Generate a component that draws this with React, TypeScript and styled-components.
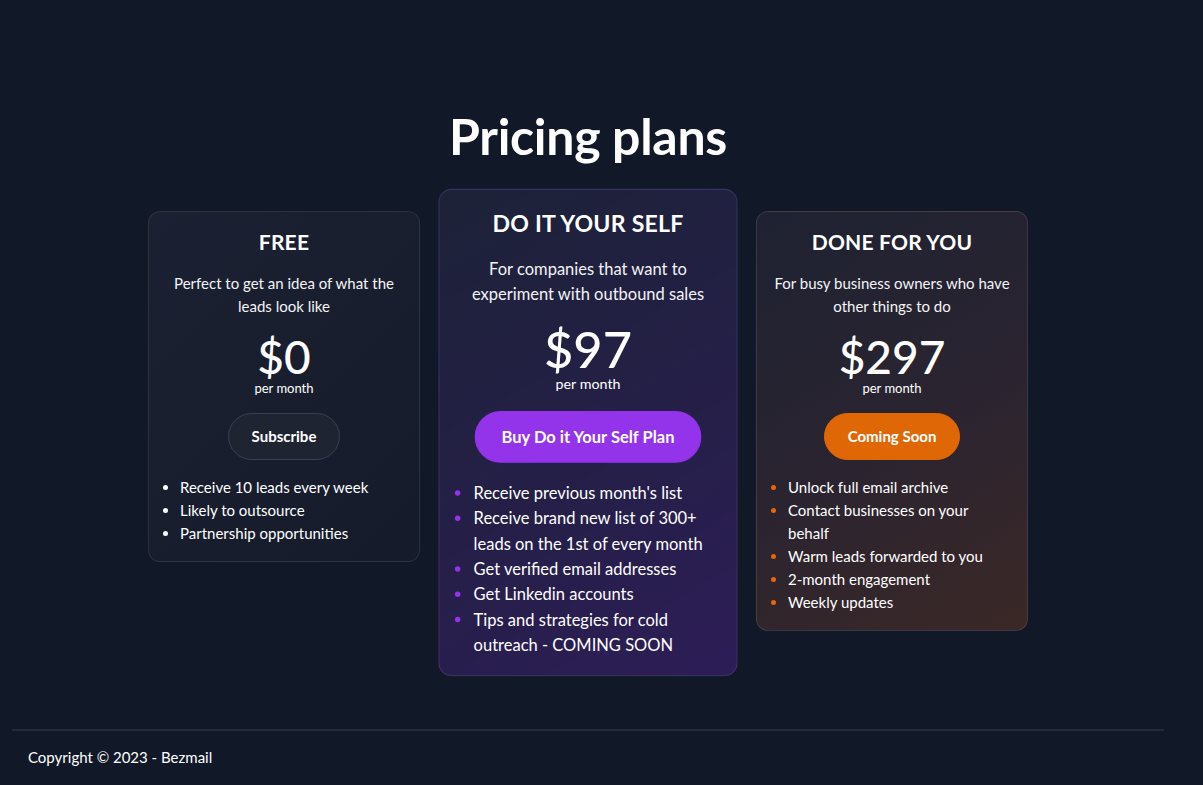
import styled, { createGlobalStyle, css } from 'styled-components';

const GlobalStyle = createGlobalStyle`
  body {
    margin: 0;
    background: #111827;
    color: #ffffff;
    font-family: Lato, "Noto Sans", sans-serif;
  }
`;

type Tone = 'free' | 'diy' | 'dfy';

const tones = {
  free: {
    bg: 'linear-gradient(135deg, #1b2132 0%, #151b2a 100%)',
    bullet: '#ffffff',
    border: 'rgba(255, 255, 255, 0.09)',
  },
  diy: {
    bg: 'linear-gradient(150deg, #1c2237 0%, #251f48 55%, #2d1d57 100%)',
    bullet: '#9333ea',
    border: 'rgba(150, 130, 220, 0.18)',
  },
  dfy: {
    bg: 'linear-gradient(150deg, #1e2232 0%, #2b2430 55%, #3b2826 100%)',
    bullet: '#e8650a',
    border: 'rgba(255, 255, 255, 0.1)',
  },
};

const Page = styled.div`
  padding: 0 39px 0 12px;
  min-height: 785px;
  display: flex;
  flex-direction: column;
`;

const Main = styled.main`
  padding-top: 104px;
  flex: 1;
`;

const Title = styled.h1`
  margin: 0 0 43px;
  text-align: center;
  font-size: 50px;
  font-weight: 700;
  line-height: 64px;
  letter-spacing: -0.3px;
`;

const Cards = styled.div`
  display: flex;
  justify-content: center;
  align-items: flex-start;
  gap: 32px;
`;

const Card = styled.section<{ $tone: Tone; $featured?: boolean }>`
  width: 272px;
  box-sizing: border-box;
  padding: 16px;
  border-radius: 12px;
  background: ${({ $tone }) => tones[$tone].bg};
  border: 1px solid ${({ $tone }) => tones[$tone].border};
  display: flex;
  flex-direction: column;
  align-items: center;
  text-align: center;
  ${({ $featured }) =>
    $featured &&
    css`
      transform: scale(1.1);
    `}
`;

const PlanName = styled.h2`
  margin: 0;
  font-size: 21px;
  font-weight: 700;
  line-height: 28px;
  letter-spacing: 0.2px;
`;

const Description = styled.p`
  margin: 16px 0 0;
  font-size: 15px;
  line-height: 23px;
  color: #f3f4f6;
`;

const Price = styled.div`
  margin-top: 15px;
  font-size: 46px;
  font-weight: 500;
  line-height: 48px;
`;

const Period = styled.div`
  font-size: 13px;
  line-height: 15px;
`;

const buttonVariants = {
  ghost: css`
    background: #1f2433;
    border: 1px solid #3a4050;
  `,
  purple: css`
    background: #9333ea;
    border: 1px solid #9333ea;
  `,
  orange: css`
    background: #e06706;
    border: 1px solid #e06706;
  `,
};

const Button = styled.button<{ $variant: keyof typeof buttonVariants }>`
  margin-top: 17px;
  padding: 12px 23px;
  border-radius: 999px;
  color: #ffffff;
  font-family: inherit;
  font-size: 15px;
  font-weight: 700;
  line-height: 21px;
  cursor: pointer;
  ${({ $variant }) => buttonVariants[$variant]}
`;

const Features = styled.ul<{ $tone: Tone }>`
  align-self: stretch;
  margin: 16px 0 0;
  padding: 0 0 0 15px;
  text-align: left;
  font-size: 15px;
  line-height: 23px;

  li::marker {
    color: ${({ $tone }) => tones[$tone].bullet};
  }
`;

const Footer = styled.footer`
  border-top: 2px solid #262b3a;
  padding: 16px 16px 18px;
  font-size: 15px;
  line-height: 20px;
`;

type Plan = {
  tone: Tone;
  name: string;
  description: string;
  price: string;
  button: string;
  variant: keyof typeof buttonVariants;
  features: string[];
  featured?: boolean;
};

const plans: Plan[] = [
  {
    tone: 'free',
    name: 'FREE',
    description: 'Perfect to get an idea of what the leads look like',
    price: '$0',
    button: 'Subscribe',
    variant: 'ghost',
    features: ['Receive 10 leads every week', 'Likely to outsource', 'Partnership opportunities'],
  },
  {
    tone: 'diy',
    name: 'DO IT YOUR SELF',
    description: 'For companies that want to experiment with outbound sales',
    price: '$97',
    button: 'Buy Do it Your Self Plan',
    variant: 'purple',
    featured: true,
    features: [
      "Receive previous month's list",
      'Receive brand new list of 300+ leads on the 1st of every month',
      'Get verified email addresses',
      'Get Linkedin accounts',
      'Tips and strategies for cold outreach - COMING SOON',
    ],
  },
  {
    tone: 'dfy',
    name: 'DONE FOR YOU',
    description: 'For busy business owners who have other things to do',
    price: '$297',
    button: 'Coming Soon',
    variant: 'orange',
    features: [
      'Unlock full email archive',
      'Contact businesses on your behalf',
      'Warm leads forwarded to you',
      '2-month engagement',
      'Weekly updates',
    ],
  },
];

export default function App() {
  return (
    <>
      <GlobalStyle />
      <Page>
        <Main>
          <Title>Pricing plans</Title>
          <Cards>
            {plans.map((plan) => (
              <Card key={plan.name} $tone={plan.tone} $featured={plan.featured}>
                <PlanName>{plan.name}</PlanName>
                <Description>{plan.description}</Description>
                <Price>{plan.price}</Price>
                <Period>per month</Period>
                <Button $variant={plan.variant}>{plan.button}</Button>
                <Features $tone={plan.tone}>
                  {plan.features.map((f) => (
                    <li key={f}>{f}</li>
                  ))}
                </Features>
              </Card>
            ))}
          </Cards>
        </Main>
        <Footer>Copyright © 2023 - Bezmail</Footer>
      </Page>
    </>
  );
}
